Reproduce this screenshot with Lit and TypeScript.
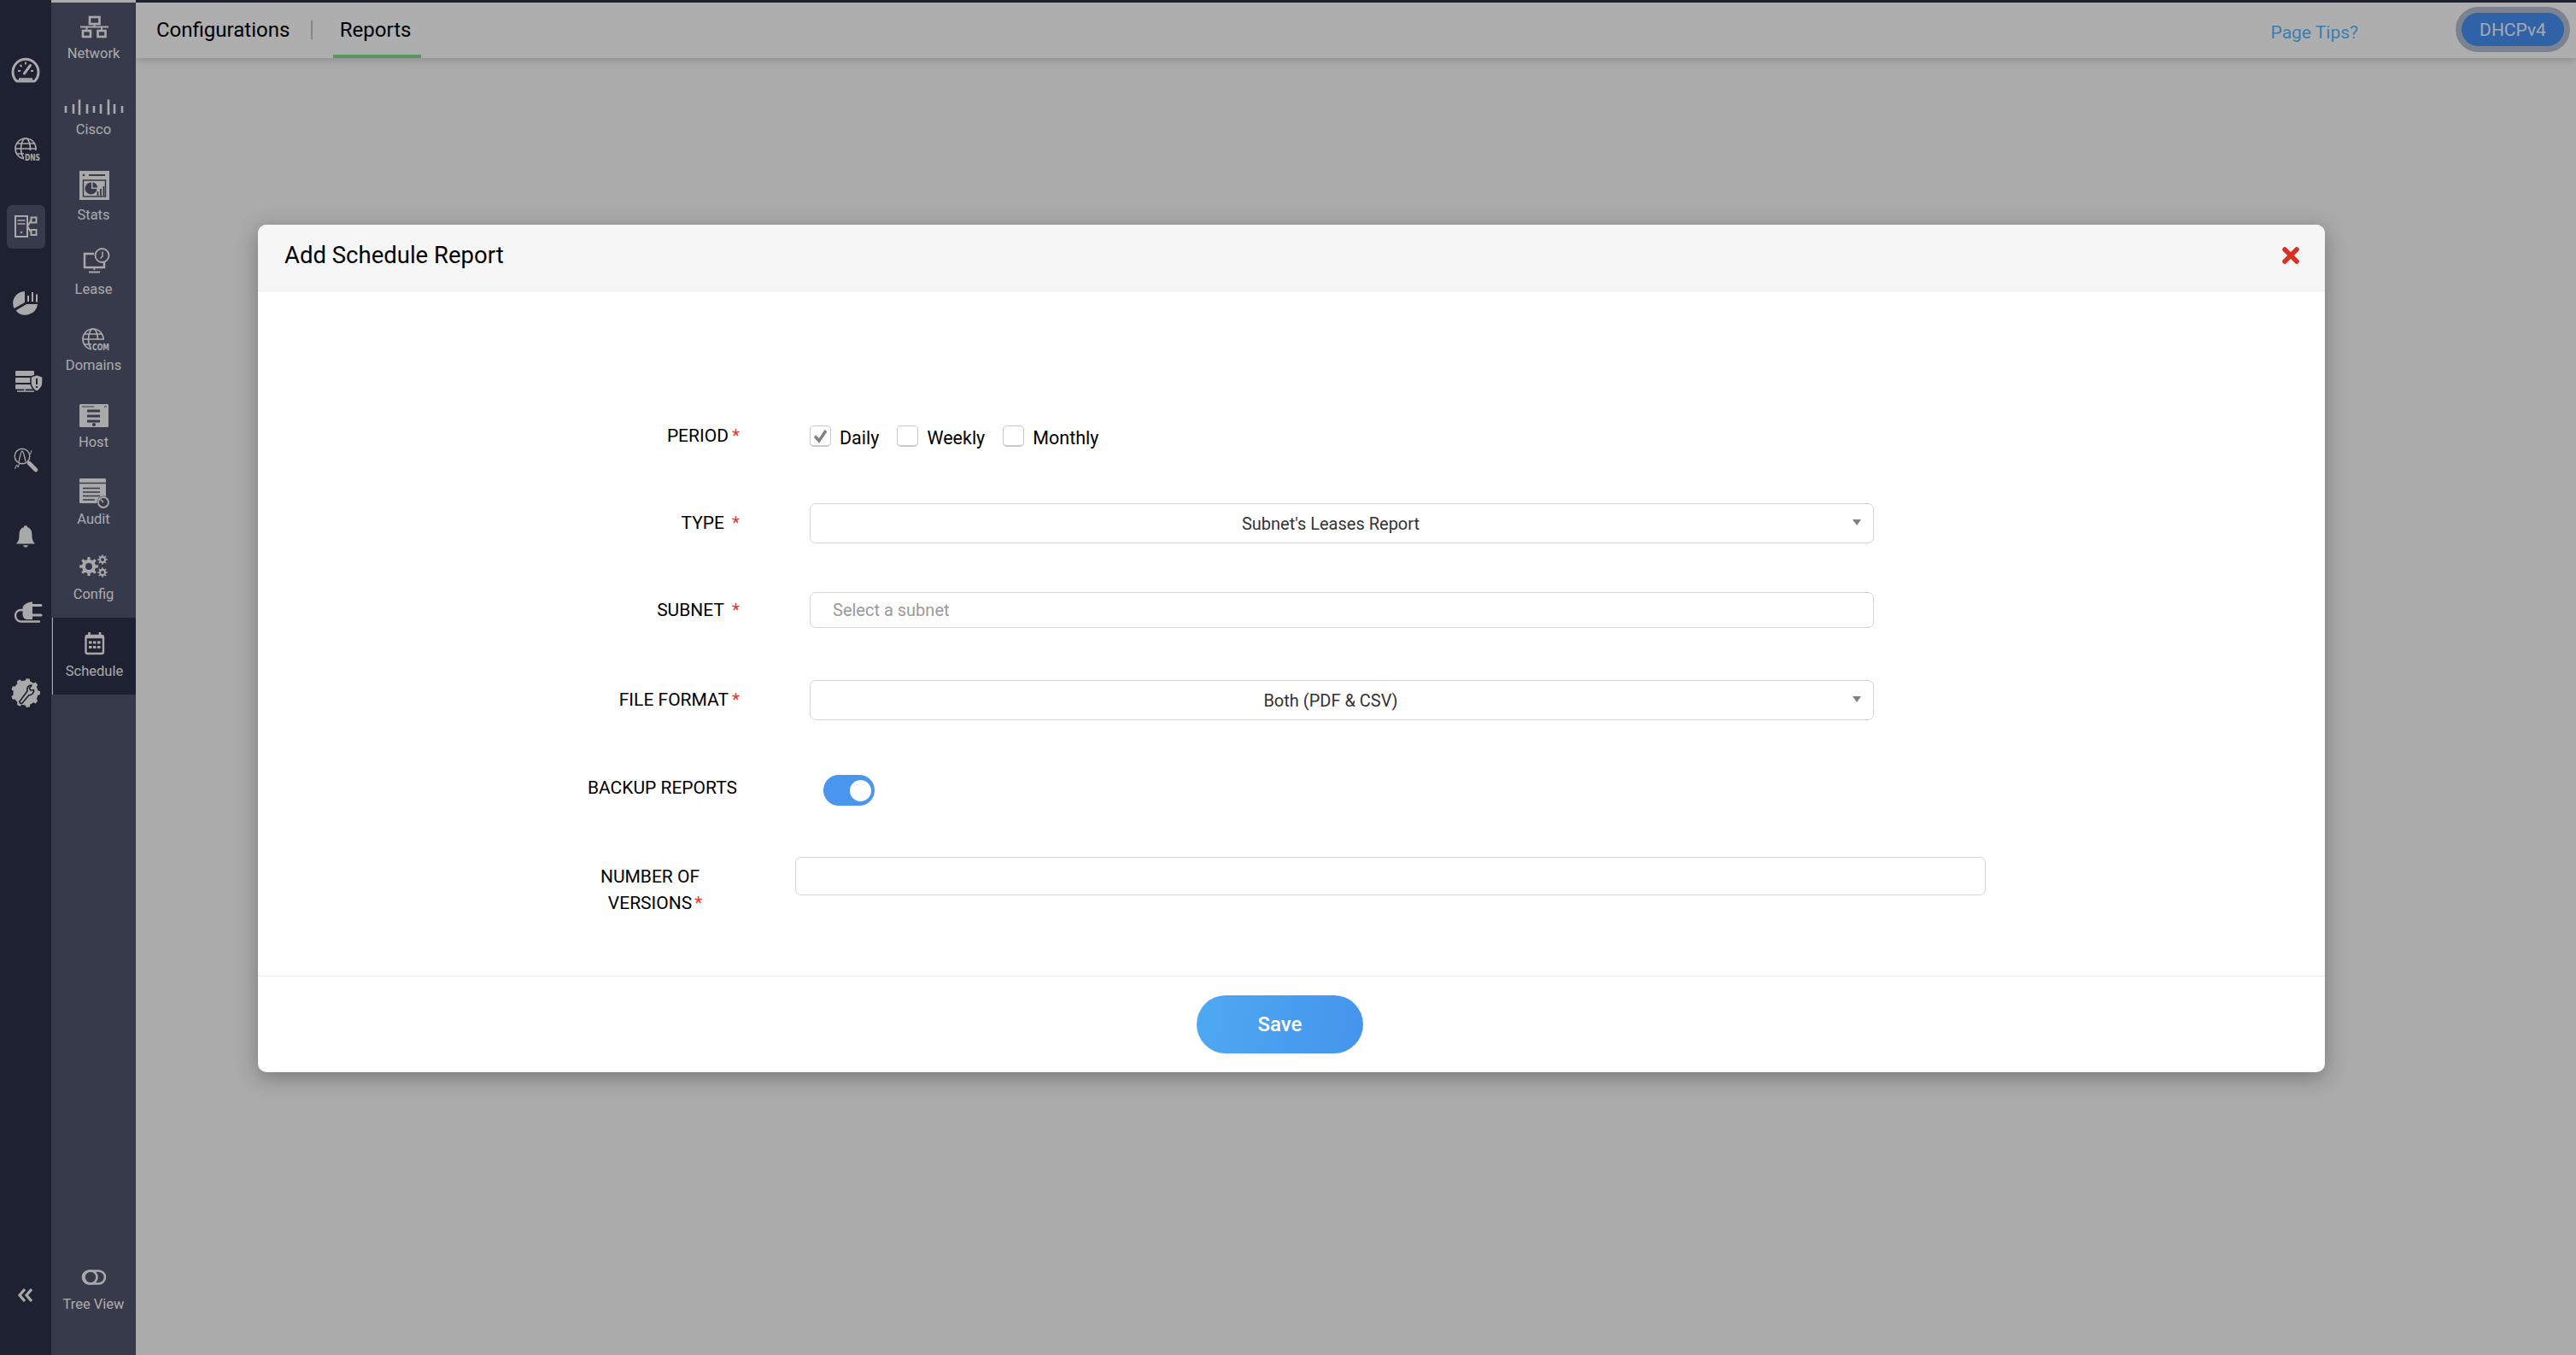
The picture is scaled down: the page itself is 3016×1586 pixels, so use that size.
import { LitElement, html, css, svg } from "lit";
import { customElement } from "lit/decorators.js";

const gear = (cx: number, cy: number, ro: number, ri: number, n: number) => {
  let d = "";
  const step = (Math.PI * 2) / n;
  for (let i = 0; i < n; i++) {
    const a = i * step;
    const pts = [
      [ri, a - step * 0.5],
      [ri, a - step * 0.28],
      [ro, a - step * 0.17],
      [ro, a + step * 0.17],
      [ri, a + step * 0.28],
    ];
    for (const [r, t] of pts) {
      d += `${d ? "L" : "M"}${(cx + r * Math.cos(t)).toFixed(2)} ${(cy + r * Math.sin(t)).toFixed(2)}`;
    }
  }
  return d + "Z";
};

const railIcons = [
  { y: 58, body: svg`<path d="M19.5 95A15 15 0 1 1 40.5 95Z" fill="none" stroke="currentColor" stroke-width="3" stroke-linejoin="round"/><path d="M22 92.5h16" stroke="currentColor" stroke-width="2.4"/><path d="M28.5 86L35.5 76.5" stroke="currentColor" stroke-width="3" stroke-linecap="round"/><path d="M30 72.5v3M21 83h3M39 83h-3M23.5 76l2 2" stroke="currentColor" stroke-width="1.8"/>` },
  { y: 149, body: svg`<g fill="none" stroke="currentColor" stroke-width="1.7"><circle cx="30" cy="174" r="12"/><ellipse cx="30" cy="174" rx="5.5" ry="12"/><path d="M18 174h24M19.5 168h21M19.5 180h21"/></g><rect x="28" y="176" width="20" height="12" class="cut"/><text x="29" y="188" class="glyph" textLength="18" lengthAdjust="spacingAndGlyphs">DNS</text>` },
  { y: 240, body: svg`<g fill="none" stroke="currentColor" stroke-width="2"><rect x="18" y="253" width="14" height="24"/><rect x="36.5" y="254.5" width="6" height="6"/><rect x="36.5" y="269" width="6" height="6"/><path d="M32 265L36.5 258M32 265L36.5 272"/></g><path d="M20.5 258h9M20.5 262h9" stroke="currentColor" stroke-width="1.6"/><circle cx="25" cy="272" r="1.2" fill="currentColor"/>` },
  { y: 331, body: svg`<path d="M29 341A14 14 0 0 0 16.500 361L29 354Z" fill="currentColor"/><path d="M31 356L18.500 363.500A14.500 14.500 0 0 0 44 356Z" fill="currentColor"/><path d="M33 346v7M38 342v11M43 344.500v9" stroke="currentColor" stroke-width="2"/>` },
  { y: 422, body: svg`<g fill="currentColor"><rect x="18" y="434" width="22" height="6" rx="1"/><rect x="18" y="442" width="22" height="6" rx="1"/><rect x="18" y="450" width="22" height="5.500" rx="1"/><path d="M29 455v3M20 458h20" stroke="currentColor" stroke-width="1.400"/><path d="M43 438.500L50 441V448C50 453 47 456 43 458.500C39 456 36 453 36 448V441Z" stroke-width="1.500" class="shield"/></g><path d="M43 443v7M43 452v2" stroke-width="2" class="cut-line"/>` },
  { y: 513, body: svg`<g fill="none" stroke="currentColor"><circle cx="26" cy="534" r="8.800" stroke-width="1.400"/><path d="M22 541C24 530 25 528 26 528C27.500 528 28.500 534 30 540" stroke-width="1.300"/><path d="M34 542L42 550" stroke-width="4.600" stroke-linecap="round"/><path d="M17.500 549L19.500 544L21 547L22.500 543M35.500 532L37 527" stroke-width="1"/></g>` },
  { y: 604, body: svg`<path d="M30 615C31.300 615 32 616 32 617C36.500 618.500 37.500 622 37.500 627C37.500 632 39 634 41 636.500H19C21 634 22.500 632 22.500 627C22.500 622 23.500 618.500 28 617C28 616 28.700 615 30 615Z" fill="currentColor"/><path d="M27 638.200H33C32.500 640 31 640.500 30 640.500C29 640.500 27.500 640 27 638.200Z" fill="currentColor"/>` },
  { y: 695, body: svg`<path d="M38 704.500V725H32C29 725 27 723 26.500 720V711C28 707 33 704.500 38 704.500Z" fill="currentColor"/><path d="M37 708.500H48M37 720H48" stroke="currentColor" stroke-width="3" stroke-linecap="round"/><path d="M28 714H24C20 714 18 717.500 18 720.500C18 724 20.500 727.500 24 727.500H46" fill="none" stroke="currentColor" stroke-width="2.400" stroke-linecap="round"/>` },
  { y: 785, body: svg`<path d="${gear(30, 810, 17, 14.5, 9)}" fill="currentColor"/><path d="M23 820L32 808C31 804 33 801 37 801L34.500 804.500L36 807L39.500 806.500C40 810 37 813 34 812.500L26 822C24.500 823 22.500 821.500 23 820Z" fill="none" stroke-width="1.700" stroke-linejoin="round" class="cut-line"/>` },
];

const navItems = [
  { label: "Network", top: 0, h: 89, body: svg`<g fill="none" stroke="currentColor" stroke-width="2.600"><rect x="105" y="20" width="11.500" height="8"/><rect x="97" y="36" width="9" height="7"/><rect x="114.500" y="36" width="9" height="7"/><path d="M94 31.500H127M110.500 28V31.500M101.500 31.500V36M119 31.500V36" stroke-width="2"/></g>` },
  { label: "Cisco", top: 89, h: 100, body: svg`<g stroke="currentColor" stroke-width="2.600" stroke-linecap="butt"><path d="M77 124v8M86 122v11M93 116.500v18M102 122v11M110 124v8M118 122v11M127 116.500v18M134 122v11M143 124v8"/></g>` },
  { label: "Stats", top: 189, h: 87, body: svg`<rect x="93" y="200" width="35" height="34" fill="currentColor"/><circle cx="98" cy="205" r="1.300" class="cut"/><path d="M104 205h19" stroke-width="2" class="cut-line"/><rect x="97.500" y="211" width="26" height="19" stroke-width="1.500" class="cut-line"/><path d="M107 213.500A7 7 0 1 0 113.500 221H107Z" class="cut"/><path d="M108.500 213.500A6 6 0 0 1 114 219.500H108.500Z" class="cut"/><path d="M114.500 224v5M118 221v8M121.500 218v11" stroke-width="1.800" class="cut-line"/>` },
  { label: "Lease", top: 276, h: 89, body: svg`<path d="M110 297H99V313H122V306" fill="none" stroke="currentColor" stroke-width="2.400"/><circle cx="119.500" cy="299" r="8" fill="none" stroke="currentColor" stroke-width="1.800"/><path d="M120 294.500V300L117.500 302.500" fill="none" stroke="currentColor" stroke-width="1.500"/><path d="M98 313h25M110.500 314V316M104 318.500h13" stroke="currentColor" stroke-width="1.800"/>` },
  { label: "Domains", top: 365, h: 90, body: svg`<g fill="none" stroke="currentColor" stroke-width="1.700"><circle cx="109" cy="397" r="12"/><ellipse cx="109" cy="397" rx="5.500" ry="12"/><path d="M97 397h24M98.500 391h21M98.500 403h21"/></g><rect x="107" y="398" width="22" height="12" class="cut"/><text x="108" y="409.500" class="glyph" textLength="20" lengthAdjust="spacingAndGlyphs">COM</text>` },
  { label: "Host", top: 455, h: 90, body: svg`<rect x="93" y="473" width="34" height="27" rx="1.500" fill="currentColor"/><path d="M96 476h14M122 476h3" stroke-width="1.200" class="cut-line"/><path d="M102 481h15M102 487h15M102 493h15" stroke-width="3" class="cut-line"/><circle cx="110" cy="497" r="2" class="cut"/>` },
  { label: "Audit", top: 545, h: 88, body: svg`<rect x="93" y="560" width="31" height="29" rx="1" fill="currentColor"/><path d="M93 565.500h31" stroke-width="1.400" class="cut-line"/><path d="M97 571.500h20M97 576h20M97 580.500h20M97 585h14" stroke-width="1.600" class="cut-line"/><circle cx="121" cy="588" r="7.500" class="cut"/><circle cx="121" cy="588" r="6" fill="none" stroke="currentColor" stroke-width="1.800"/><path d="M121 588L118 584.500" stroke="currentColor" stroke-width="1.500"/>` },
  { label: "Config", top: 633, h: 90, body: svg`<path d="${gear(104, 663, 11, 8, 8)}" fill="currentColor"/><circle cx="104" cy="663" r="4" class="cut"/><path d="${gear(120, 655, 5.800, 4, 8)}" fill="currentColor"/><circle cx="120" cy="655" r="2" class="cut"/><path d="${gear(120, 670, 5.800, 4, 8)}" fill="currentColor"/><circle cx="120" cy="670" r="2" class="cut"/>` },
  { label: "Schedule", top: 723, h: 90, active: true, body: svg`<rect x="100.500" y="744" width="20.500" height="21" rx="2" fill="none" stroke="currentColor" stroke-width="2.400"/><path d="M104.500 740v5M117 740v5" stroke="currentColor" stroke-width="2.600"/><path d="M100.500 746h20.500" stroke="currentColor" stroke-width="2.400"/><g fill="currentColor"><rect x="104" y="750.500" width="3.500" height="3"/><rect x="109" y="750.500" width="3.500" height="3"/><rect x="114" y="750.500" width="3.500" height="3"/><rect x="104" y="756" width="3.500" height="3"/><rect x="109" y="756" width="3.500" height="3"/><rect x="114" y="756" width="3.500" height="3"/></g>` },
];

@customElement("app-root")
export class AppRoot extends LitElement {
  static styles = css`
    :host {
      display: block;
      position: relative;
      width: 3016px;
      height: 1586px;
      overflow: hidden;
      font-family: Roboto, "Liberation Sans", sans-serif;
      color: #000;
      background: #f4f4f4;
    }
    .shell { display: flex; height: 100%; }
    .rail {
      width: 60px;
      background: #2c3047;
      color: #f3f3f3;
      display: flex;
      flex-direction: column;
      align-items: center;
      padding-top: 58px;
      gap: 40px;
      box-sizing: border-box;
      --cut: #2c3047;
    }
    .rail-item { width: 45px; height: 51px; border-radius: 6px; display: block; position: relative; }
    .rail-item.on { background: #4f536b; --cut: #4f536b; }
    .rail-item svg { position: absolute; left: -8px; top: 0; width: 60px; height: 51px; }
    .rail-collapse { margin-top: auto; margin-bottom: 60px; height: 20px; width: 45px; display: flex; justify-content: center; }
    .nav {
      width: 99px;
      margin-top: 3px;
      background: #4f536b;
      color: #f3f3f3;
      display: flex;
      flex-direction: column;
      --cut: #4f536b;
      position: relative;
    }
    .nav-first { margin-top: -3px; }
    .nav-item {
      display: flex;
      flex-direction: column;
      align-items: center;
      box-sizing: border-box;
      position: relative;
    }
    .nav-item.on { background: #2c3047; --cut: #2c3047; border-left: 1px solid #f3f3f3; margin-left: 1px; }
    .nav-item svg { display: block; width: 72px; height: 50px; margin-bottom: 1px; flex: none; }
    .nav-item.on svg { margin-left: -2px; }
    .nav-label { font-size: 16.5px; line-height: 24px; text-align: center; white-space: nowrap; }
    .nav-tree { margin-top: auto; margin-bottom: 47px; display: flex; flex-direction: column; align-items: center; }
    .nav-tree svg { width: 30px; height: 20px; margin-bottom: 10px; }
    .cut { fill: var(--cut); stroke: none; }
    .cut-line { stroke: var(--cut); fill: none; }
    .shield { fill: currentColor; stroke: var(--cut); }
    .glyph { font: 700 11px "DejaVu Sans", sans-serif; fill: currentColor; }
    .main { flex: 1; display: flex; flex-direction: column; min-width: 0; }
    .topband { height: 3px; background: #2c3047; flex: none; }
    .header {
      height: 65px;
      flex: none;
      background: #fafafa;
      box-shadow: 0 2px 8px rgba(0, 0, 0, 0.18);
      display: flex;
      align-items: center;
      padding: 0 0 2px 24px;
      box-sizing: border-box;
      position: relative;
    }
    .tab { font-size: 24px; line-height: 30px; }
    .sep { width: 1.5px; height: 22px; background: #c0c0c0; margin: 0 32px 0 25px; }
    .tab.on { position: relative; }
    .tab.on::after {
      content: "";
      position: absolute;
      left: -8px;
      right: -12px;
      top: 44px;
      height: 4px;
      background: #80d689;
    }
    .tips { margin-left: auto; font-size: 21px; color: #57b5ff; margin-right: 121px; position: relative; top: 3px; }
    .pill {
      width: 120px;
      height: 39px;
      border-radius: 20px;
      background: #458df0;
      color: #f0f0f8;
      font-size: 21px;
      display: flex;
      align-items: center;
      justify-content: center;
      box-shadow: 0 0 0 7px #b3bace;
      margin-right: 14px;
    }
    .overlay {
      position: absolute;
      inset: 0;
      background: rgba(0, 0, 0, 0.3);
      padding-top: 263px;
      box-sizing: border-box;
    }
    .modal {
      width: 2420px;
      margin-left: 302px;
      background: #fff;
      border-radius: 10px;
      box-shadow: 0 6px 24px rgba(0, 0, 0, 0.3);
      overflow: hidden;
    }
    .modal-head {
      height: 71px;
      background: #f6f6f6;
      border-bottom: 1px solid #ececec;
      box-sizing: content-box;
      display: flex;
      align-items: center;
      justify-content: space-between;
      padding: 0 29px 6px 31px;
    }
    .modal-title { font-size: 27.5px; font-weight: 400; }
    .close { width: 22px; height: 22px; display: block; }
    .body { padding: 154px 0 70px; height: 801px; box-sizing: border-box; }
    .row { display: grid; grid-template-columns: 564px 1246px; column-gap: 82px; align-items: center; }
    .lab { text-align: right; font-size: 21px; line-height: 31px; white-space: nowrap; }
    .star { color: #f53324; margin-left: 4px; }
    .star.wide { margin-left: 9px; }
    .r-period { height: 25px; }
    .r-type { margin-top: 69px; }
    .r-subnet { margin-top: 57px; }
    .r-file { margin-top: 61px; }
    .r-backup { margin-top: 64px; }
    .r-number { margin-top: 60px; grid-template-columns: 429px 1394px; column-gap: 200px; align-items: start; }
    .r-number .lab { text-align: center; padding-top: 8px; width: 318px; margin-left: 300px; }
    .r-number .star { display: inline-block; margin-left: 3px; margin-right: -12px; width: 9px; }
    .r-backup .lab { padding-right: 3px; position: relative; top: -3px; }
    .checks { display: flex; align-items: center; font-size: 21.5px; }
    .check {
      width: 25px;
      height: 25px;
      box-sizing: border-box;
      border: 1px solid #c9c9c9;
      border-bottom-width: 2px;
      border-radius: 5px;
      background: #fff;
      margin-right: 10px;
      flex: none;
      display: flex;
      align-items: center;
      justify-content: center;
    }
    .check svg { width: 19px; height: 19px; }
    .opt { display: flex; align-items: center; margin-right: 21px; }
    .opt span { position: relative; top: 2px; }
    .sel, .inp {
      box-sizing: border-box;
      width: 100%;
      border: 1.5px solid #d2d2d8;
      border-radius: 7px;
      background: #fff;
      font: 400 20px Roboto, "Liberation Sans", sans-serif;
      color: #333;
    }
    .sel {
      height: 47px;
      display: flex;
      align-items: center;
      justify-content: center;
      padding-right: 26px;
      position: relative;
    }
    .sel::after {
      content: "";
      position: absolute;
      right: 14px;
      top: 18px;
      border-left: 5.5px solid transparent;
      border-right: 5.5px solid transparent;
      border-top: 7px solid #808080;
    }
    .inp { height: 42px; padding: 0 26px; display: block; outline: none; }
    .inp::placeholder { color: #9a9a9a; opacity: 1; }
    .inp.tall { height: 45px; }
    .toggle {
      width: 60px;
      height: 36px;
      border-radius: 18px;
      background: #4a96ee;
      margin-left: 16px;
      display: flex;
      align-items: center;
      justify-content: flex-end;
      padding-right: 4px;
      box-sizing: border-box;
    }
    .knob { width: 25px; height: 25px; border-radius: 50%; background: #fff; }
    .foot {
      height: 112px;
      border-top: 1px solid #ececec;
      display: flex;
      align-items: center;
      justify-content: center;
      padding-right: 27px;
    }
    .save {
      width: 195px;
      height: 68px;
      border: 0;
      border-radius: 34px;
      background: linear-gradient(100deg, #4fa9f2, #4494ec);
      color: #fff;
      font: 500 24px Roboto, "Liberation Sans", sans-serif;
    }
  `;

  render() {
    return html`
      <div class="shell">
        <aside class="rail">
          ${railIcons.map(
            (r, i) => html`<div class="rail-item ${i === 2 ? "on" : ""}">
              <svg viewBox="0 ${r.y} 60 51">${r.body}</svg>
            </div>`
          )}
          <div class="rail-collapse">
            <svg width="20" height="20" viewBox="0 0 20 20" fill="none" stroke="currentColor" stroke-width="3.200">
              <path d="M9 3L3 10L9 17M17 3L11 10L17 17" />
            </svg>
          </div>
        </aside>
        <nav class="nav">
          <div class="nav-first"></div>
          ${navItems.map(
            (n) => html`<div class="nav-item ${n.active ? "on" : ""}" style="height:${n.h}px">
              <svg viewBox="74 ${n.top} 72 50">${n.body}</svg>
              <div class="nav-label">${n.label}</div>
            </div>`
          )}
          <div class="nav-tree">
            <svg viewBox="0 0 30 20" fill="none" stroke="currentColor" stroke-width="2.600">
              <rect x="2" y="2.500" width="26" height="15" rx="7.500" />
              <circle cx="11" cy="10" r="7.500" />
            </svg>
            <div class="nav-label">Tree View</div>
          </div>
        </nav>
        <div class="main">
          <div class="topband"></div>
          <header class="header">
            <div class="tab">Configurations</div>
            <div class="sep"></div>
            <div class="tab on">Reports</div>
            <div class="tips">Page Tips?</div>
            <div class="pill">DHCPv4</div>
          </header>
        </div>
      </div>
      <div class="overlay">
        <section class="modal">
          <div class="modal-head">
            <div class="modal-title">Add Schedule Report</div>
            <svg class="close" viewBox="0 0 22 22">
              <path d="M4 4L18 18M18 4L4 18" stroke="#d93025" stroke-width="5.500" stroke-linecap="round" />
            </svg>
          </div>
          <div class="body">
            <div class="row r-period">
              <div class="lab">PERIOD<span class="star">*</span></div>
              <div class="checks">
                <div class="opt">
                  <div class="check">
                    <svg viewBox="0 0 19 19"><path d="M3 9.500L8 15L16 3" fill="none" stroke="#808080" stroke-width="3.400" /></svg>
                  </div>
                  <span>Daily</span>
                </div>
                <div class="opt"><div class="check"></div><span>Weekly</span></div>
                <div class="opt"><div class="check"></div><span>Monthly</span></div>
              </div>
            </div>
            <div class="row r-type">
              <div class="lab">TYPE<span class="star wide">*</span></div>
              <div class="sel">Subnet's Leases Report</div>
            </div>
            <div class="row r-subnet">
              <div class="lab">SUBNET<span class="star wide">*</span></div>
              <input class="inp" placeholder="Select a subnet" />
            </div>
            <div class="row r-file">
              <div class="lab">FILE FORMAT<span class="star">*</span></div>
              <div class="sel">Both (PDF &amp; CSV)</div>
            </div>
            <div class="row r-backup">
              <div class="lab">BACKUP REPORTS</div>
              <div class="toggle"><div class="knob"></div></div>
            </div>
            <div class="row r-number">
              <div class="lab">NUMBER OF<br />VERSIONS<span class="star">*</span></div>
              <input class="inp tall" />
            </div>
          </div>
          <div class="foot"><button class="save">Save</button></div>
        </section>
      </div>
    `;
  }
}
